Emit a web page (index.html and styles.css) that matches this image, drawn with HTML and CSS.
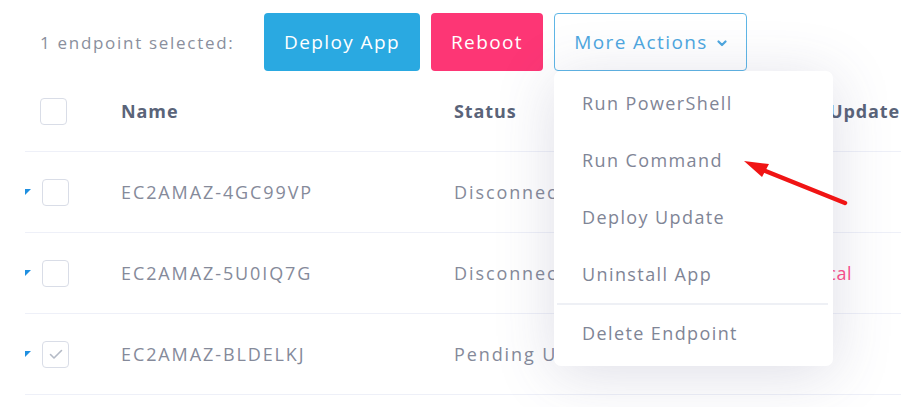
FILE: index.html
```html
<!DOCTYPE html>
<html lang="en">
<head>
    <meta charset="UTF-8">
    <meta name="viewport" content="width=device-width, initial-scale=1.0">
    <title>Endpoints</title>
    <link rel="stylesheet" href="styles.css">
</head>
<body>

    <div class="page">
        <div class="toolbar">
            <span class="selected-count">1 endpoint selected:</span>
            <button class="btn btn-deploy">Deploy App</button>
            <button class="btn btn-reboot">Reboot</button>
            <div class="dropdown">
                <button class="btn btn-more">More Actions
                    <svg class="chevron" width="10" height="7" viewBox="0 0 10 7">
                        <path d="M1.5 1.5 L5 5 L8.5 1.5" fill="none" stroke="#4ea7df" stroke-width="2.2" stroke-linecap="round" stroke-linejoin="round"/>
                    </svg>
                </button>
                <ul class="dropdown-menu">
                    <li>Run PowerShell</li>
                    <li>Run Command</li>
                    <li>Deploy Update</li>
                    <li>Uninstall App</li>
                    <li class="divider"></li>
                    <li>Delete Endpoint</li>
                </ul>
            </div>
        </div>

        <div class="endpoints">
            <div class="row row-head">
                <div class="cell cell-check"><span class="checkbox"></span></div>
                <div class="cell">Name</div>
                <div class="cell">Status</div>
                <div class="cell">Last Update</div>
            </div>
            <div class="row">
                <div class="cell cell-check"><span class="marker"></span><span class="checkbox"></span></div>
                <div class="cell">EC2AMAZ-4GC99VP</div>
                <div class="cell">Disconnected</div>
                <div class="cell"></div>
            </div>
            <div class="row">
                <div class="cell cell-check"><span class="marker"></span><span class="checkbox"></span></div>
                <div class="cell">EC2AMAZ-5U0IQ7G</div>
                <div class="cell">Disconnected</div>
                <div class="cell"><span class="critical">Critical</span></div>
            </div>
            <div class="row">
                <div class="cell cell-check"><span class="marker"></span><span class="checkbox checked">
                    <svg width="14" height="11" viewBox="0 0 14 11"><path d="M1.5 5.5 L5 9 L12.5 1.5" fill="none" stroke="#b4bac6" stroke-width="1.6" stroke-linecap="round" stroke-linejoin="round"/></svg>
                </span></div>
                <div class="cell">EC2AMAZ-BLDELKJ</div>
                <div class="cell">Pending Update</div>
                <div class="cell"></div>
            </div>
        </div>

        <!-- annotation arrow -->
        <svg class="arrow" width="110" height="55" viewBox="0 0 110 55">
            <line x1="18" y1="13" x2="105" y2="48" stroke="#f01414" stroke-width="4.5" stroke-linecap="round"/>
            <polygon points="4,6 29,9 22,22" fill="#f01414"/>
        </svg>
    </div>

</body>
</html>
```

FILE: styles.css
```css
        body {
            margin: 0;
            background: #ffffff;
            font-family: 'Open Sans', 'Noto Sans', Arial, sans-serif;
            color: #80869a;
        }

        .page {
            position: relative;
            width: 901px;
            height: 407px;
            overflow: hidden;
        }

        .toolbar {
            display: flex;
            align-items: center;
            gap: 11px;
            padding: 13px 0 0 40px;
            height: 58px;
        }

        .selected-count {
            width: 213px;
            font-size: 17px;
            letter-spacing: 1.7px;
            color: #8a8f9d;
            white-space: nowrap;
        }

        .btn {
            height: 58px;
            border: none;
            border-radius: 4px;
            font-family: inherit;
            font-size: 19px;
            letter-spacing: 1.4px;
            color: #ffffff;
            cursor: pointer;
        }

        .btn-deploy {
            width: 156px;
            background-color: #2aa9e1;
        }

        .btn-reboot {
            width: 112px;
            background-color: #fd3675;
        }

        .dropdown {
            position: relative;
        }

        .btn-more {
            width: 193px;
            background: #ffffff;
            border: 1px solid #5fb6e6;
            color: #4ea7df;
            display: flex;
            align-items: center;
            justify-content: center;
            gap: 9px;
        }

        .chevron {
            margin-top: 2px;
        }

        .dropdown-menu {
            position: absolute;
            top: 100%;
            left: 0;
            width: 279px;
            margin: 0;
            padding: 4px 0;
            list-style: none;
            background: #ffffff;
            border-radius: 7px;
            box-shadow: 0 8px 60px rgba(70, 70, 120, 0.18);
            z-index: 5;
        }

        .dropdown-menu li {
            height: 57px;
            line-height: 57px;
            padding-left: 28px;
            font-size: 18px;
            letter-spacing: 1.4px;
            color: #7f8596;
        }

        .dropdown-menu li.divider {
            height: 2px;
            margin: 0 5px 0 3px;
            padding: 0;
            background: #eef0f5;
        }

        .endpoints {
            margin-left: 25px;
        }

        .row {
            display: grid;
            grid-template-columns: 96px 333px 328px 1fr;
            height: 80px;
            align-items: center;
            border-bottom: 1px solid #eef0f8;
            font-size: 18px;
            letter-spacing: 1.9px;
            color: #858a9a;
        }

        .row-head {
            font-weight: 700;
            letter-spacing: 0.9px;
            color: #5a6479;
        }

        .cell {
            white-space: nowrap;
        }

        .cell-check {
            display: flex;
            align-items: center;
            padding-left: 17px;
        }

        .row-head .cell-check {
            padding-left: 15px;
        }

        .marker {
            width: 0;
            height: 0;
            border-top: 6px solid #1f8fe0;
            border-right: 6px solid transparent;
            margin-left: -17px;
            margin-right: 11px;
        }

        .checkbox {
            display: flex;
            align-items: center;
            justify-content: center;
            width: 25px;
            height: 25px;
            border: 1px solid #d9dde7;
            border-radius: 4px;
            background: #ffffff;
        }

        .critical {
            margin-left: 8px;
            letter-spacing: 0.6px;
            color: #ff4f8b;
        }

        .arrow {
            position: absolute;
            left: 740px;
            top: 155px;
            z-index: 10;
        }
```
